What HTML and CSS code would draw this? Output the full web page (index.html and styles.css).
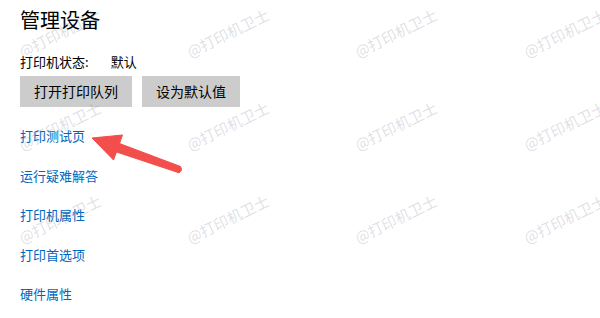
FILE: index.html
```html
<!DOCTYPE html>
<html lang="zh-CN">
<head>
<meta charset="utf-8">
<title>管理设备</title>
<link rel="stylesheet" href="styles.css">
</head>
<body>
<main class="page">
  <h1 class="title">管理设备</h1>
  <div class="status">
    <span class="status-label">打印机状态:</span>
    <span class="status-value">默认</span>
  </div>
  <div class="buttons">
    <button class="btn">打开打印队列</button>
    <button class="btn">设为默认值</button>
  </div>
  <nav class="links">
    <a class="link" href="#">打印测试页</a>
    <a class="link" href="#">运行疑难解答</a>
    <a class="link" href="#">打印机属性</a>
    <a class="link" href="#">打印首选项</a>
    <a class="link" href="#">硬件属性</a>
  </nav>
</main>
<div class="watermarks" aria-hidden="true">
  <span class="wm" style="left:60px;top:33px">@打印机卫士</span>
  <span class="wm" style="left:228px;top:33px">@打印机卫士</span>
  <span class="wm" style="left:396px;top:33px">@打印机卫士</span>
  <span class="wm" style="left:565px;top:33px">@打印机卫士</span>
  <span class="wm" style="left:60px;top:126px">@打印机卫士</span>
  <span class="wm" style="left:228px;top:126px">@打印机卫士</span>
  <span class="wm" style="left:396px;top:126px">@打印机卫士</span>
  <span class="wm" style="left:565px;top:126px">@打印机卫士</span>
  <span class="wm" style="left:60px;top:219px">@打印机卫士</span>
  <span class="wm" style="left:228px;top:219px">@打印机卫士</span>
  <span class="wm" style="left:396px;top:219px">@打印机卫士</span>
  <span class="wm" style="left:565px;top:219px">@打印机卫士</span>
</div>
<svg class="arrow" width="600" height="318" viewBox="0 0 600 318" aria-hidden="true">
  <path d="M92 138 L122.5 135 L119.5 143.5 L180.5 166.5 Q183 170.5 179 172.8 L116.5 152 L113.5 160 Z" fill="#f24e4b" stroke="#f24e4b" stroke-width="1" stroke-linejoin="round"/>
</svg>
</body>
</html>
```

FILE: styles.css
```css
html, body {
  margin: 0;
  padding: 0;
  background: #ffffff;
}
body {
  width: 600px;
  height: 318px;
  overflow: hidden;
  position: relative;
  font-family: "Noto Sans CJK SC", "Noto Sans", sans-serif;
  color: #000000;
}
.page {
  display: flex;
  flex-direction: column;
  align-items: flex-start;
  padding: 6px 0 0 20px;
}
.title {
  margin: 0;
  font-size: 20px;
  font-weight: 400;
  line-height: 28px;
}
.status {
  display: flex;
  margin-top: 18px;
  font-size: 13px;
  line-height: 20px;
}
.status-label {
  margin-right: 22px;
}
.buttons {
  display: flex;
  gap: 10px;
  margin-top: 4px;
}
.btn {
  height: 31px;
  padding: 0 14px;
  border: none;
  border-radius: 0;
  background: #cccccc;
  color: #000000;
  font-family: inherit;
  font-size: 14px;
  line-height: 31px;
}
.links {
  display: flex;
  flex-direction: column;
  align-items: flex-start;
  gap: 19.5px;
  margin-top: 19px;
}
.link {
  font-size: 13px;
  line-height: 20px;
  color: #0067c0;
  text-decoration: none;
}
.watermarks {
  position: absolute;
  inset: 0;
  pointer-events: none;
}
.wm {
  position: absolute;
  transform: translate(-50%, -50%) rotate(-26deg);
  font-size: 15px;
  line-height: 18px;
  white-space: nowrap;
  color: rgba(120, 120, 140, 0.24);
}
.arrow {
  position: absolute;
  left: 0;
  top: 0;
  pointer-events: none;
}
```
